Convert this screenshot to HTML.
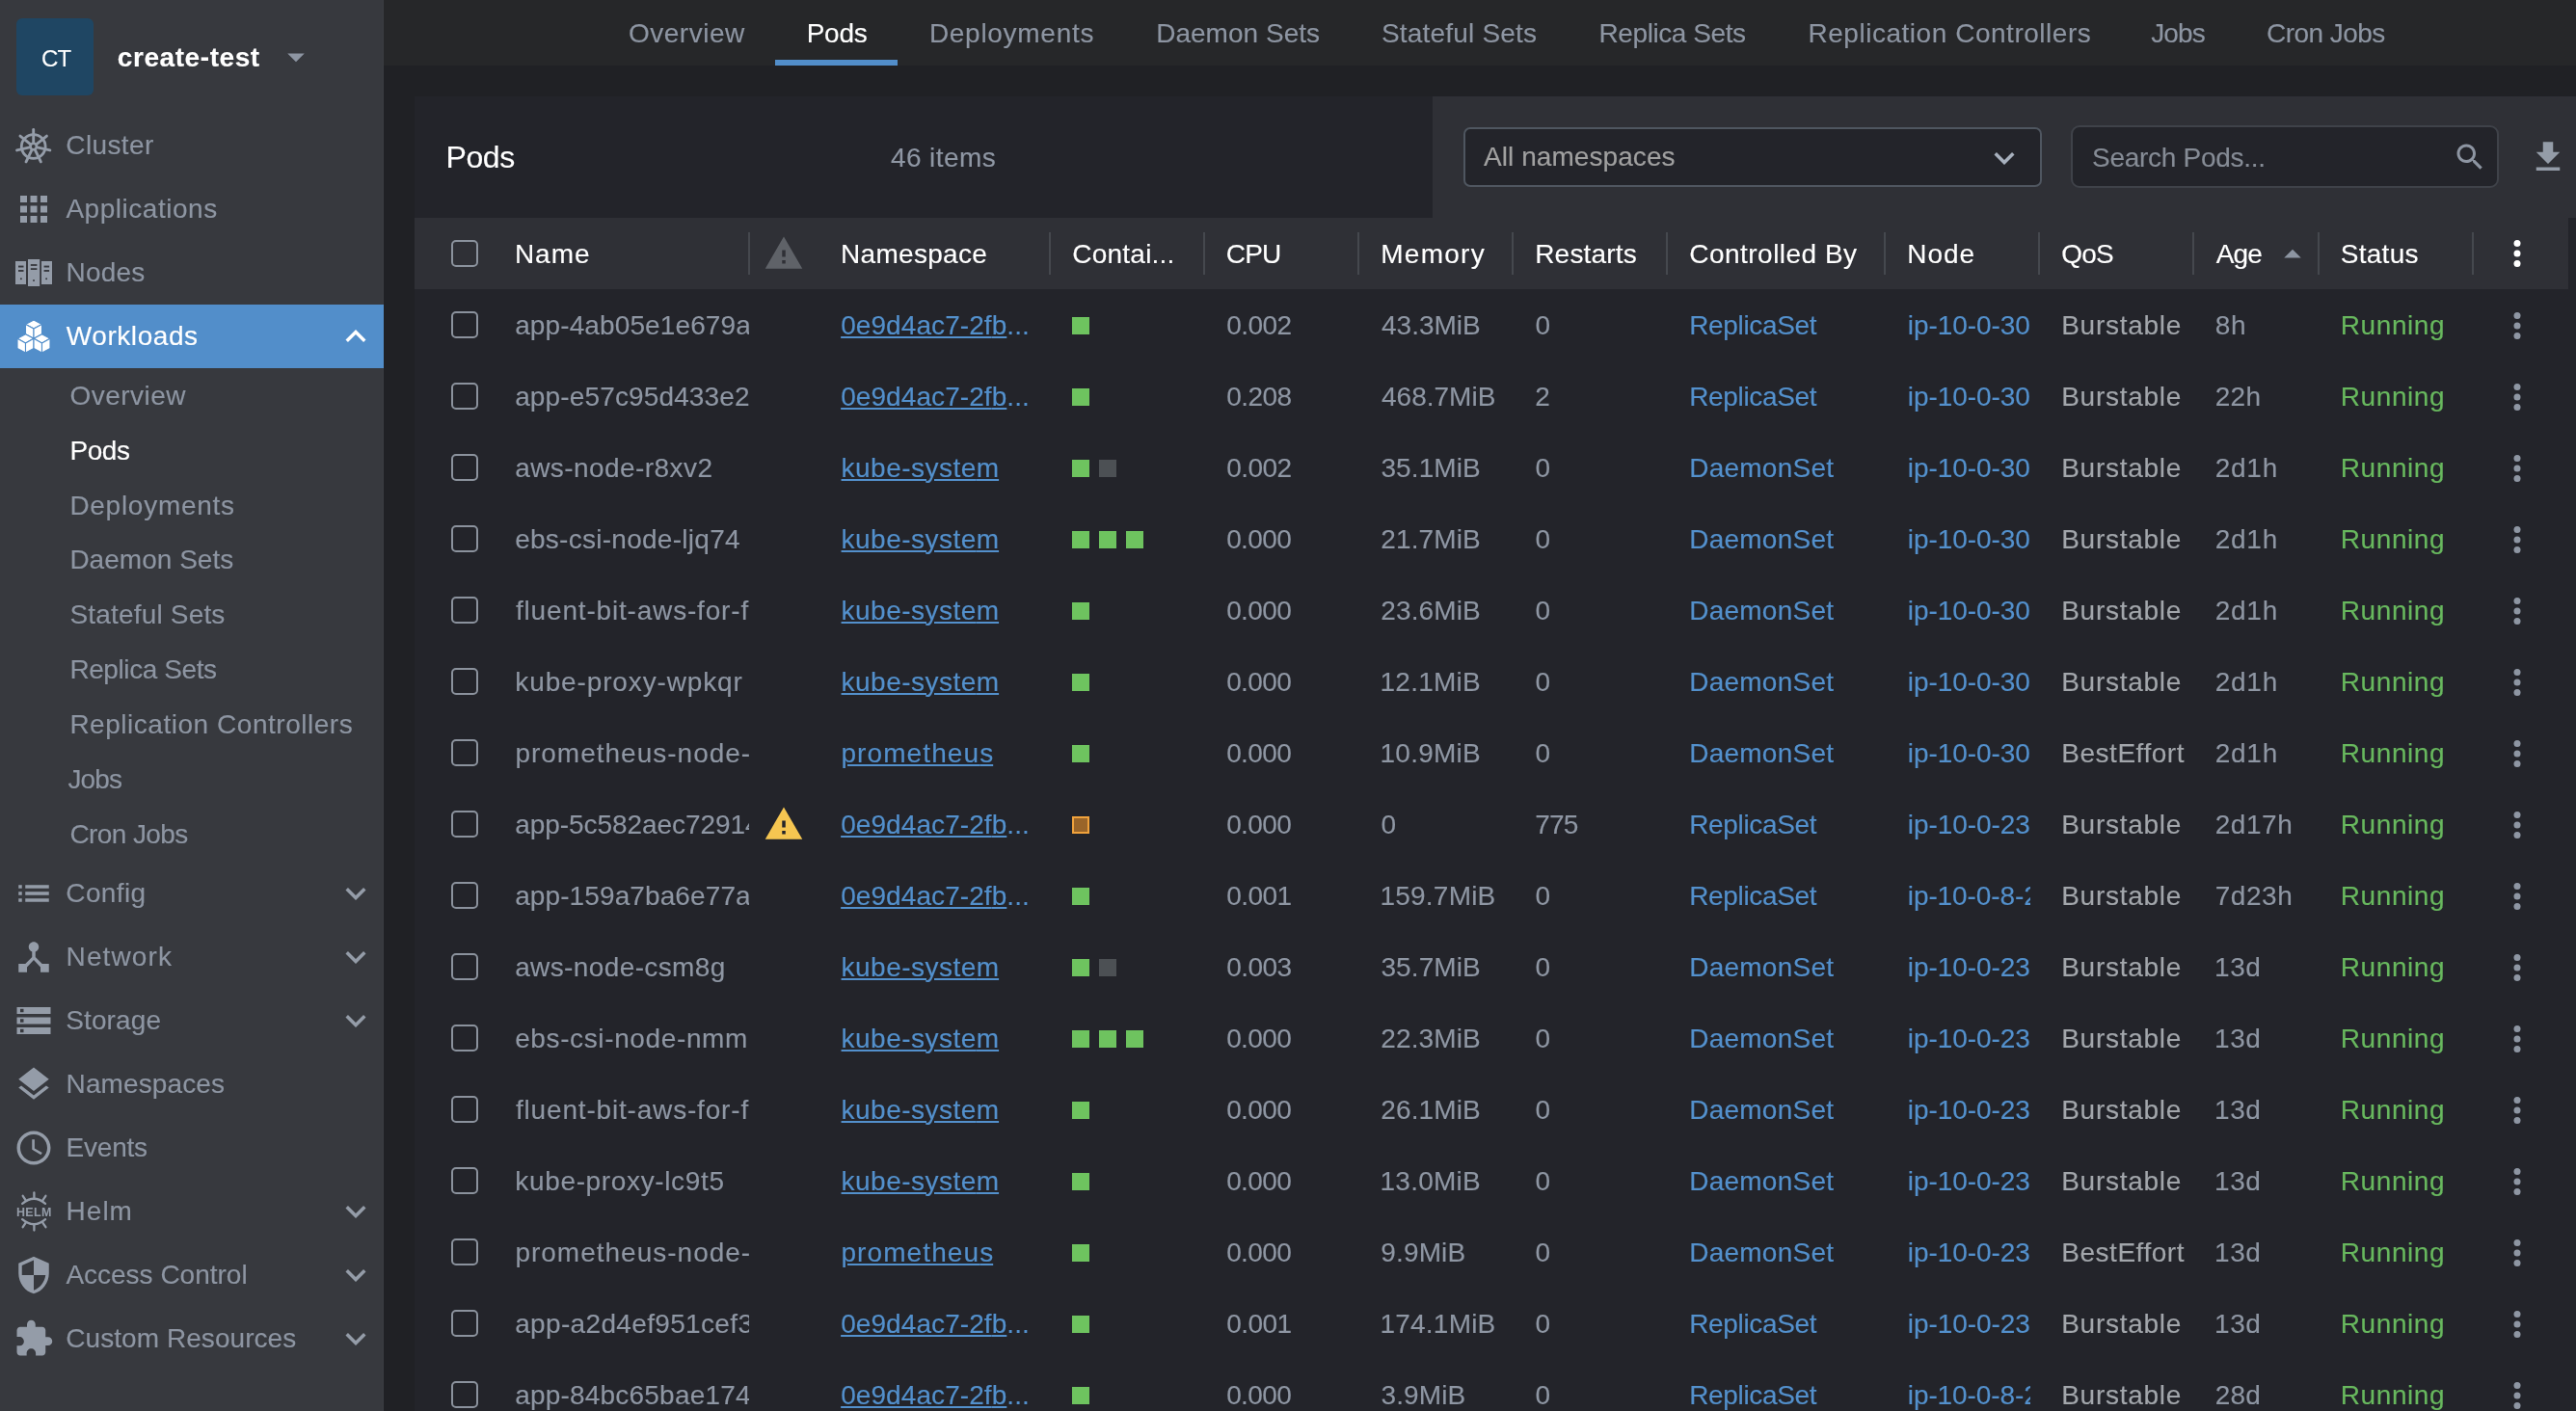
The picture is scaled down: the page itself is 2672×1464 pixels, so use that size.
<!DOCTYPE html>
<html lang="en"><head><meta charset="utf-8"><title>Pods</title><style>
*{box-sizing:border-box}
html,body{margin:0;padding:0}
#app{position:absolute;left:0;top:0;width:2672px;height:1464px;overflow:hidden;will-change:transform}
body{width:2672px;height:1464px;overflow:hidden;background:#202125;font-family:"Liberation Sans",sans-serif;font-size:28px;position:relative}
.b{position:absolute}
.t{position:absolute;white-space:pre;line-height:40px;height:40px;-webkit-text-stroke:0.14px}
.t u{text-decoration-thickness:2px;text-underline-offset:2px}
.t .z{letter-spacing:0}
.ic{position:absolute;width:42px;height:42px;display:block}
.sq{position:absolute;width:18px;height:18px;display:block}
.cb{position:absolute;width:28px;height:28px;border:2px solid #8b929d;border-radius:5px;display:block}
.sep{position:absolute;top:241px;width:2px;height:44px;background:#45484e;display:block}
</style></head><body><div id="app">
<div class="b" style="left:0;top:0;width:398px;height:1464px;background:#37393e"></div>
<div class="b" style="left:397px;top:0;width:1px;height:1464px;background:#3a3c41"></div>
<div class="b" style="left:17px;top:19px;width:80px;height:80px;border-radius:6px;background:#1f4663"></div>
<div class="b" style="left:0;top:316px;width:398px;height:66px;background:#528eca"></div>
<div class="b" style="left:398px;top:0;width:2274px;height:68px;background:#262729"></div>
<div class="b" style="left:804px;top:62px;width:127px;height:6px;background:#528eca"></div>
<div class="b" style="left:430px;top:100px;width:2242px;height:1364px;background:#23242a"></div>
<div class="b" style="left:1486px;top:100px;width:1186px;height:126px;background:#2f3036"></div>
<div class="b" style="left:430px;top:226px;width:2234px;height:74px;background:#2f3036"></div>
<div class="b" style="left:1518px;top:132px;width:600px;height:61.6px;border:2px solid #4f5660;border-radius:7px;background:#23242a"></div>
<div class="b" style="left:2148px;top:130px;width:444px;height:64.5px;border:2px solid #3f4249;border-radius:9px;background:#23242a"></div>
<i class="cb" style="left:468px;top:249px"></i>
<i class="sep" style="left:776px"></i><i class="sep" style="left:1088px"></i><i class="sep" style="left:1248px"></i><i class="sep" style="left:1408px"></i><i class="sep" style="left:1568px"></i><i class="sep" style="left:1728px"></i><i class="sep" style="left:1954px"></i><i class="sep" style="left:2114px"></i><i class="sep" style="left:2274px"></i><i class="sep" style="left:2404px"></i><i class="sep" style="left:2564px"></i>
<svg class="ic" style="left:0;top:120px;width:70px;height:64px" viewBox="0 120 70 64"><g stroke="#949ca8" fill="none"><circle cx="34.7" cy="152.0" r="12.4" stroke-width="2.8"/><g stroke-width="2.9" stroke-linecap="round"><line x1="34.70" y1="148.00" x2="34.70" y2="134.40"/><line x1="37.83" y1="149.51" x2="48.46" y2="141.03"/><line x1="38.60" y1="152.89" x2="51.86" y2="155.92"/><line x1="36.44" y1="155.60" x2="42.34" y2="167.86"/><line x1="32.96" y1="155.60" x2="27.06" y2="167.86"/><line x1="30.80" y1="152.89" x2="17.54" y2="155.92"/><line x1="31.57" y1="149.51" x2="20.94" y2="141.03"/></g><circle cx="34.7" cy="152.0" r="3.2" stroke-width="2.6"/></g></svg>
<svg class="ic" style="left:14px;top:195.8px;width:42px;height:42px" viewBox="0 0 24 24" fill="#949ca8" ><path d="M4 8h4V4H4v4zm6 12h4v-4h-4v4zm-6 0h4v-4H4v4zm0-6h4v-4H4v4zm6 0h4v-4h-4v4zm6-10v4h4V4h-4zm-6 4h4V4h-4v4zm6 6h4v-4h-4v4zm0 6h4v-4h-4v4z"/></svg>
<svg class="ic" style="left:0;top:260px;width:70px;height:46px" viewBox="0 260 70 46"><g fill="#949ca8"><rect x="16" y="271" width="11" height="24"/><rect x="29" y="269" width="12.2" height="28"/><rect x="43" y="271" width="11" height="24"/></g><g fill="#37393e"><rect x="19" y="275.6" width="5.5" height="1.9"/><rect x="19" y="280" width="5.5" height="1.9"/><rect x="31.8" y="274.1" width="6.6" height="1.8"/><rect x="31.8" y="278.2" width="6.6" height="1.8"/><rect x="45.6" y="275.6" width="5.5" height="1.9"/><rect x="45.6" y="280" width="5.5" height="1.9"/><circle cx="21.9" cy="289.3" r="1"/><circle cx="35" cy="291.1" r="1"/><circle cx="48.1" cy="289.3" r="1"/></g></svg>
<svg class="ic" style="left:0;top:326px;width:70px;height:46px" viewBox="0 326 70 46"><g fill="#fff" stroke="#528eca" stroke-width="1.1" stroke-linejoin="round"><polygon points="35,331.9 43.5,336.5 35,341.09999999999997 26.5,336.5"/><polygon points="26.5,336.5 35,341.09999999999997 35,351.29999999999995 26.5,346.7"/><polygon points="43.5,336.5 35,341.09999999999997 35,351.29999999999995 43.5,346.7"/><polygon points="26.5,346.7 35.0,351.3 26.5,355.9 18.0,351.3"/><polygon points="18.0,351.3 26.5,355.9 26.5,366.09999999999997 18.0,361.5"/><polygon points="35.0,351.3 26.5,355.9 26.5,366.09999999999997 35.0,361.5"/><polygon points="43.5,346.7 52.0,351.3 43.5,355.9 35.0,351.3"/><polygon points="35.0,351.3 43.5,355.9 43.5,366.09999999999997 35.0,361.5"/><polygon points="52.0,351.3 43.5,355.9 43.5,366.09999999999997 52.0,361.5"/></g></svg>
<svg class="ic" style="left:348px;top:327.8px;width:42px;height:42px" viewBox="0 0 24 24" fill="#fff" ><path d="M7.41 15.41L12 10.83l4.59 4.58L18 14l-6-6-6 6z"/></svg>
<svg class="ic" style="left:14px;top:906.1px;width:42px;height:42px" viewBox="0 0 24 24" fill="#949ca8" ><path d="M3 13h2v-2H3v2zm0 4h2v-2H3v2zm0-8h2V7H3v2zm4 4h14v-2H7v2zm0 4h14v-2H7v2zM7 7v2h14V7H7z"/></svg>
<svg class="ic" style="left:14px;top:972.1px;width:42px;height:42px" viewBox="0 0 24 24" fill="#949ca8" ><path d="M17 16l-4-4V8.82C14.16 8.4 15 7.3 15 6c0-1.66-1.34-3-3-3S9 4.34 9 6c0 1.3.84 2.4 2 2.82V12l-4 4H3v5h5v-3.05l4-4.2 4 4.2V21h5v-5h-4z"/></svg>
<svg class="ic" style="left:14px;top:1038.1px;width:42px;height:42px" viewBox="0 0 24 24" fill="#949ca8" ><path d="M2 20h20v-4H2v4zm2-3h2v2H4v-2zM2 4v4h20V4H2zm4 3H4V5h2v2zm-4 7h20v-4H2v4zm2-3h2v2H4v-2z"/></svg>
<svg class="ic" style="left:14px;top:1104.1px;width:42px;height:42px" viewBox="0 0 24 24" fill="#949ca8" ><path d="M11.99 18.54l-7.37-5.73L3 14.07l9 7 9-7-1.63-1.27-7.38 5.74zM12 16l7.36-5.73L21 9l-9-7-9 7 1.63 1.27L12 16z"/></svg>
<svg class="ic" style="left:14px;top:1170.1px;width:42px;height:42px" viewBox="0 0 24 24" fill="#949ca8" ><path d="M11.99 2C6.47 2 2 6.48 2 12s4.47 10 9.99 10C17.52 22 22 17.52 22 12S17.52 2 11.99 2zM12 20c-4.42 0-8-3.58-8-8s3.58-8 8-8 8 3.58 8 8-3.58 8-8 8zm.5-13H11v6l5.25 3.15.75-1.23-4.5-2.67z"/></svg>
<svg class="ic" style="left:14px;top:1302.1px;width:42px;height:42px" viewBox="0 0 24 24" fill="#949ca8" ><path d="M12 1L3 5v6c0 5.55 3.84 10.74 9 12 5.16-1.26 9-6.45 9-12V5l-9-4zm0 10.99h7c-.53 4.12-3.28 7.79-7 8.94V12H5V6.3l7-3.11v8.8z"/></svg>
<svg class="ic" style="left:14px;top:1368.1px;width:42px;height:42px" viewBox="0 0 24 24" fill="#949ca8" ><path d="M20.5 11H19V7c0-1.1-.9-2-2-2h-4V3.5C13 2.12 11.88 1 10.5 1S8 2.12 8 3.5V5H4c-1.1 0-1.99.9-1.99 2v3.8H3.5c1.49 0 2.7 1.21 2.7 2.7s-1.21 2.7-2.7 2.7H2V20c0 1.1.9 2 2 2h3.8v-1.5c0-1.49 1.21-2.7 2.7-2.7 1.49 0 2.7 1.21 2.7 2.7V22H17c1.1 0 2-.9 2-2v-4h1.5c1.38 0 2.5-1.12 2.5-2.5S21.88 11 20.5 11z"/></svg>
<svg class="ic" style="left:348px;top:906.1px;width:42px;height:42px" viewBox="0 0 24 24" fill="#949ca8" ><path d="M7.41 8.59L12 13.17l4.59-4.58L18 10l-6 6-6-6 1.41-1.41z"/></svg>
<svg class="ic" style="left:348px;top:972.1px;width:42px;height:42px" viewBox="0 0 24 24" fill="#949ca8" ><path d="M7.41 8.59L12 13.17l4.59-4.58L18 10l-6 6-6-6 1.41-1.41z"/></svg>
<svg class="ic" style="left:348px;top:1038.1px;width:42px;height:42px" viewBox="0 0 24 24" fill="#949ca8" ><path d="M7.41 8.59L12 13.17l4.59-4.58L18 10l-6 6-6-6 1.41-1.41z"/></svg>
<svg class="ic" style="left:348px;top:1236.1px;width:42px;height:42px" viewBox="0 0 24 24" fill="#949ca8" ><path d="M7.41 8.59L12 13.17l4.59-4.58L18 10l-6 6-6-6 1.41-1.41z"/></svg>
<svg class="ic" style="left:348px;top:1302.1px;width:42px;height:42px" viewBox="0 0 24 24" fill="#949ca8" ><path d="M7.41 8.59L12 13.17l4.59-4.58L18 10l-6 6-6-6 1.41-1.41z"/></svg>
<svg class="ic" style="left:348px;top:1368.1px;width:42px;height:42px" viewBox="0 0 24 24" fill="#949ca8" ><path d="M7.41 8.59L12 13.17l4.59-4.58L18 10l-6 6-6-6 1.41-1.41z"/></svg>
<svg class="ic" style="left:0;top:1230px;width:70px;height:54px" viewBox="0 1230 70 54"><g stroke="#949ca8" stroke-width="2.3" fill="none" stroke-linecap="round"><path d="M23.2 1248.9 Q35.2 1238.6 47.0 1248.9" /><line x1="35.4" y1="1243.4" x2="35.4" y2="1237.5"/><line x1="27.0" y1="1245.8" x2="23.7" y2="1240.8"/><line x1="44.0" y1="1245.8" x2="47.4" y2="1240.8"/><path d="M23.2 1265.1 Q35.2 1275.4 47.0 1265.1" /><line x1="35.4" y1="1270.6" x2="35.4" y2="1276.5"/><line x1="27.0" y1="1268.2" x2="23.7" y2="1273.2"/><line x1="44.0" y1="1268.2" x2="47.4" y2="1273.2"/></g><text transform="translate(0,1261.8) scale(1,1.08)" x="16.9" y="0" textLength="36.5" lengthAdjust="spacing" font-family="Liberation Sans, sans-serif" font-weight="700" font-size="12.5" fill="#949ca8">HELM</text></svg>
<svg class="ic" style="left:285.7px;top:37.800000000000004px;width:42px;height:42px" viewBox="0 0 24 24" fill="#8d95a2" ><path d="M7 10l5 5 5-5z"/></svg>
<svg class="ic" style="left:2058px;top:142.8px;width:42px;height:42px" viewBox="0 0 24 24" fill="#a7b0bd" ><path d="M7.41 8.59L12 13.17l4.59-4.58L18 10l-6 6-6-6 1.41-1.41z"/></svg>
<svg class="ic" style="left:2544px;top:144.6px;width:36px;height:36px" viewBox="0 0 24 24" fill="#8d95a2" ><path d="M15.5 14h-.79l-.28-.27C15.41 12.59 16 11.11 16 9.5 16 5.91 13.09 3 9.5 3S3 5.91 3 9.5 5.91 16 9.5 16c1.61 0 3.09-.59 4.23-1.57l.27.28v.79l5 4.99L20.49 19l-4.99-5zm-6 0C7.01 14 5 11.99 5 9.5S7.01 5 9.5 5 14 7.01 14 9.5 11.99 14 9.5 14z"/></svg>
<svg class="ic" style="left:2622px;top:141.6px;width:42px;height:42px" viewBox="0 0 24 24" fill="#949ca8" ><path d="M19 9h-4V3H9v6H5l7 7 7-7zM5 18v2h14v-2H5z"/></svg>
<svg class="ic" style="left:792px;top:241.5px;width:42px;height:42px" viewBox="0 0 24 24" fill="#5f6268" ><path d="M1 21h22L12 2 1 21zm12-3h-2v-2h2v2zm0-4h-2v-4h2v4z"/></svg>
<svg class="ic" style="left:2357px;top:243.4px;width:42px;height:42px" viewBox="0 0 24 24" fill="#8d95a2" ><path d="M7 14l5-5 5 5z"/></svg>
<svg class="ic" style="left:2590px;top:242px" viewBox="0 0 24 24" fill="#fff"><circle cx="12" cy="6" r="2"/><circle cx="12" cy="12" r="2"/><circle cx="12" cy="18" r="2"/></svg>
<i class="sq" style="left:1112px;top:329px;background:#6ec35f"></i>
<i class="cb" style="left:468px;top:323px"></i>
<svg class="ic" style="left:2590px;top:317px" viewBox="0 0 24 24" fill="#8e96a3"><circle cx="12" cy="6" r="2"/><circle cx="12" cy="12" r="2"/><circle cx="12" cy="18" r="2"/></svg>
<i class="sq" style="left:1112px;top:403px;background:#6ec35f"></i>
<i class="cb" style="left:468px;top:397px"></i>
<svg class="ic" style="left:2590px;top:391px" viewBox="0 0 24 24" fill="#8e96a3"><circle cx="12" cy="6" r="2"/><circle cx="12" cy="12" r="2"/><circle cx="12" cy="18" r="2"/></svg>
<i class="sq" style="left:1112px;top:477px;background:#6ec35f"></i>
<i class="sq" style="left:1140px;top:477px;background:#4c5054"></i>
<i class="cb" style="left:468px;top:471px"></i>
<svg class="ic" style="left:2590px;top:465px" viewBox="0 0 24 24" fill="#8e96a3"><circle cx="12" cy="6" r="2"/><circle cx="12" cy="12" r="2"/><circle cx="12" cy="18" r="2"/></svg>
<i class="sq" style="left:1112px;top:551px;background:#6ec35f"></i>
<i class="sq" style="left:1140px;top:551px;background:#6ec35f"></i>
<i class="sq" style="left:1168px;top:551px;background:#6ec35f"></i>
<i class="cb" style="left:468px;top:545px"></i>
<svg class="ic" style="left:2590px;top:539px" viewBox="0 0 24 24" fill="#8e96a3"><circle cx="12" cy="6" r="2"/><circle cx="12" cy="12" r="2"/><circle cx="12" cy="18" r="2"/></svg>
<i class="sq" style="left:1112px;top:625px;background:#6ec35f"></i>
<i class="cb" style="left:468px;top:619px"></i>
<svg class="ic" style="left:2590px;top:613px" viewBox="0 0 24 24" fill="#8e96a3"><circle cx="12" cy="6" r="2"/><circle cx="12" cy="12" r="2"/><circle cx="12" cy="18" r="2"/></svg>
<i class="sq" style="left:1112px;top:699px;background:#6ec35f"></i>
<i class="cb" style="left:468px;top:693px"></i>
<svg class="ic" style="left:2590px;top:687px" viewBox="0 0 24 24" fill="#8e96a3"><circle cx="12" cy="6" r="2"/><circle cx="12" cy="12" r="2"/><circle cx="12" cy="18" r="2"/></svg>
<i class="sq" style="left:1112px;top:773px;background:#6ec35f"></i>
<i class="cb" style="left:468px;top:767px"></i>
<svg class="ic" style="left:2590px;top:761px" viewBox="0 0 24 24" fill="#8e96a3"><circle cx="12" cy="6" r="2"/><circle cx="12" cy="12" r="2"/><circle cx="12" cy="18" r="2"/></svg>
<i class="sq" style="left:1112px;top:847px;background:#9a6529;box-shadow:inset 0 0 0 2px #f0a23c"></i>
<i class="cb" style="left:468px;top:841px"></i>
<svg class="ic" style="left:2590px;top:835px" viewBox="0 0 24 24" fill="#8e96a3"><circle cx="12" cy="6" r="2"/><circle cx="12" cy="12" r="2"/><circle cx="12" cy="18" r="2"/></svg>
<svg class="ic" style="left:792px;top:833.5px" viewBox="0 0 24 24"><path fill="#f6c651" d="M1 21h22L12 2 1 21z"/><path fill="#23242a" d="M13 18h-2v-2h2v2zm0-4h-2v-4h2v4z"/></svg>
<i class="sq" style="left:1112px;top:921px;background:#6ec35f"></i>
<i class="cb" style="left:468px;top:915px"></i>
<svg class="ic" style="left:2590px;top:909px" viewBox="0 0 24 24" fill="#8e96a3"><circle cx="12" cy="6" r="2"/><circle cx="12" cy="12" r="2"/><circle cx="12" cy="18" r="2"/></svg>
<i class="sq" style="left:1112px;top:995px;background:#6ec35f"></i>
<i class="sq" style="left:1140px;top:995px;background:#4c5054"></i>
<i class="cb" style="left:468px;top:989px"></i>
<svg class="ic" style="left:2590px;top:983px" viewBox="0 0 24 24" fill="#8e96a3"><circle cx="12" cy="6" r="2"/><circle cx="12" cy="12" r="2"/><circle cx="12" cy="18" r="2"/></svg>
<i class="sq" style="left:1112px;top:1069px;background:#6ec35f"></i>
<i class="sq" style="left:1140px;top:1069px;background:#6ec35f"></i>
<i class="sq" style="left:1168px;top:1069px;background:#6ec35f"></i>
<i class="cb" style="left:468px;top:1063px"></i>
<svg class="ic" style="left:2590px;top:1057px" viewBox="0 0 24 24" fill="#8e96a3"><circle cx="12" cy="6" r="2"/><circle cx="12" cy="12" r="2"/><circle cx="12" cy="18" r="2"/></svg>
<i class="sq" style="left:1112px;top:1143px;background:#6ec35f"></i>
<i class="cb" style="left:468px;top:1137px"></i>
<svg class="ic" style="left:2590px;top:1131px" viewBox="0 0 24 24" fill="#8e96a3"><circle cx="12" cy="6" r="2"/><circle cx="12" cy="12" r="2"/><circle cx="12" cy="18" r="2"/></svg>
<i class="sq" style="left:1112px;top:1217px;background:#6ec35f"></i>
<i class="cb" style="left:468px;top:1211px"></i>
<svg class="ic" style="left:2590px;top:1205px" viewBox="0 0 24 24" fill="#8e96a3"><circle cx="12" cy="6" r="2"/><circle cx="12" cy="12" r="2"/><circle cx="12" cy="18" r="2"/></svg>
<i class="sq" style="left:1112px;top:1291px;background:#6ec35f"></i>
<i class="cb" style="left:468px;top:1285px"></i>
<svg class="ic" style="left:2590px;top:1279px" viewBox="0 0 24 24" fill="#8e96a3"><circle cx="12" cy="6" r="2"/><circle cx="12" cy="12" r="2"/><circle cx="12" cy="18" r="2"/></svg>
<i class="sq" style="left:1112px;top:1365px;background:#6ec35f"></i>
<i class="cb" style="left:468px;top:1359px"></i>
<svg class="ic" style="left:2590px;top:1353px" viewBox="0 0 24 24" fill="#8e96a3"><circle cx="12" cy="6" r="2"/><circle cx="12" cy="12" r="2"/><circle cx="12" cy="18" r="2"/></svg>
<i class="sq" style="left:1112px;top:1439px;background:#6ec35f"></i>
<i class="cb" style="left:468px;top:1433px"></i>
<svg class="ic" style="left:2590px;top:1427px" viewBox="0 0 24 24" fill="#8e96a3"><circle cx="12" cy="6" r="2"/><circle cx="12" cy="12" r="2"/><circle cx="12" cy="18" r="2"/></svg>
<div class="t" style="left:43.03px;top:41px;color:#ffffff;font-size:24px;letter-spacing:-0.900px;">CT</div>
<div class="t" style="left:121.83px;top:40px;color:#ffffff;font-weight:700;letter-spacing:0.571px;">create-test</div>
<div class="t" style="left:68.35px;top:131px;color:#8d95a2;letter-spacing:0.367px;">Cluster</div>
<div class="t" style="left:68.39px;top:197px;color:#8d95a2;letter-spacing:0.528px;">Applications</div>
<div class="t" style="left:68.59px;top:263px;color:#8d95a2;letter-spacing:0.177px;">Nodes</div>
<div class="t" style="left:68.79px;top:329px;color:#ffffff;letter-spacing:0.566px;">Workloads</div>
<div class="t" style="left:68.35px;top:907px;color:#8d95a2;letter-spacing:0.363px;">Config</div>
<div class="t" style="left:68.59px;top:973px;color:#8d95a2;letter-spacing:1.113px;">Network</div>
<div class="t" style="left:68.20px;top:1039px;color:#8d95a2;letter-spacing:0.125px;">Storage</div>
<div class="t" style="left:68.59px;top:1105px;color:#8d95a2;letter-spacing:0.115px;">Namespaces</div>
<div class="t" style="left:68.59px;top:1171px;color:#8d95a2;letter-spacing:-0.232px;">Events</div>
<div class="t" style="left:68.59px;top:1237px;color:#8d95a2;letter-spacing:1.003px;">Helm</div>
<div class="t" style="left:68.39px;top:1303px;color:#8d95a2;">Access Control</div>
<div class="t" style="left:68.35px;top:1369px;color:#8d95a2;letter-spacing:0.050px;">Custom Resources</div>
<div class="t" style="left:72.54px;top:391px;color:#8d95a2;letter-spacing:0.459px;">Overview</div>
<div class="t" style="left:72.39px;top:448px;color:#ffffff;letter-spacing:-0.390px;">Pods</div>
<div class="t" style="left:72.39px;top:505px;color:#8d95a2;letter-spacing:0.724px;">Deployments</div>
<div class="t" style="left:72.39px;top:561px;color:#8d95a2;letter-spacing:0.023px;">Daemon Sets</div>
<div class="t" style="left:72.40px;top:618px;color:#8d95a2;letter-spacing:0.185px;">Stateful Sets</div>
<div class="t" style="left:72.39px;top:675px;color:#8d95a2;letter-spacing:-0.410px;">Replica Sets</div>
<div class="t" style="left:72.39px;top:732px;color:#8d95a2;letter-spacing:0.529px;">Replication Controllers</div>
<div class="t" style="left:70.45px;top:789px;color:#8d95a2;letter-spacing:-0.900px;">Jobs</div>
<div class="t" style="left:72.45px;top:846px;color:#8d95a2;letter-spacing:-0.591px;">Cron Jobs</div>
<div class="t" style="left:651.94px;top:15px;color:#8d95a2;letter-spacing:0.516px;">Overview</div>
<div class="t" style="left:836.69px;top:15px;color:#ffffff;letter-spacing:-0.257px;">Pods</div>
<div class="t" style="left:963.89px;top:15px;color:#8d95a2;letter-spacing:0.714px;">Deployments</div>
<div class="t" style="left:1199.19px;top:15px;color:#8d95a2;letter-spacing:0.023px;">Daemon Sets</div>
<div class="t" style="left:1433.00px;top:15px;color:#8d95a2;letter-spacing:0.193px;">Stateful Sets</div>
<div class="t" style="left:1658.59px;top:15px;color:#8d95a2;letter-spacing:-0.428px;">Replica Sets</div>
<div class="t" style="left:1875.49px;top:15px;color:#8d95a2;letter-spacing:0.529px;">Replication Controllers</div>
<div class="t" style="left:2231.25px;top:15px;color:#8d95a2;letter-spacing:-0.900px;">Jobs</div>
<div class="t" style="left:2351.05px;top:15px;color:#8d95a2;letter-spacing:-0.553px;">Cron Jobs</div>
<div class="t" style="left:462.57px;top:143px;color:#ffffff;font-size:32px;letter-spacing:-0.441px;">Pods</div>
<div class="t" style="left:923.94px;top:144px;color:#8e96a3;letter-spacing:0.411px;">46 items</div>
<div class="t" style="left:1538.99px;top:143px;color:#a0a0a0;letter-spacing:0.072px;">All namespaces</div>
<div class="t" style="left:2170.10px;top:144px;color:#858b95;letter-spacing:-0.287px;">Search Pods...</div>
<div class="t" style="left:533.89px;top:244px;color:#ffffff;letter-spacing:0.997px;">Name</div>
<div class="t" style="left:872.09px;top:244px;color:#ffffff;letter-spacing:0.289px;">Namespace</div>
<div class="t" style="left:1112.25px;top:244px;color:#ffffff;letter-spacing:0.233px;">Contai...</div>
<div class="t" style="left:1271.85px;top:244px;color:#ffffff;letter-spacing:-0.900px;">CPU</div>
<div class="t" style="left:1432.19px;top:244px;color:#ffffff;letter-spacing:1.279px;">Memory</div>
<div class="t" style="left:1592.19px;top:244px;color:#ffffff;letter-spacing:0.199px;">Restarts</div>
<div class="t" style="left:1752.25px;top:244px;color:#ffffff;letter-spacing:0.478px;">Controlled By</div>
<div class="t" style="left:1978.29px;top:244px;color:#ffffff;letter-spacing:0.914px;">Node</div>
<div class="t" style="left:2138.34px;top:244px;color:#ffffff;letter-spacing:-0.900px;">QoS</div>
<div class="t" style="left:2298.79px;top:244px;color:#ffffff;letter-spacing:-0.900px;">Age</div>
<div class="t" style="left:2427.80px;top:244px;color:#ffffff;letter-spacing:0.266px;">Status</div>
<div class="t" style="left:534.16px;top:318px;color:#8e96a3;letter-spacing:0.113px;width:242.44px;overflow:hidden;">app-4ab05e1e679a9c-6d8f7b9c54-x2kqp</div>
<div class="t" style="left:872.13px;top:318px;color:#5390cc;letter-spacing:0.081px;"><u>0e9d4ac7-2f<span class="z">b</span></u>...</div>
<div class="t" style="left:1272.13px;top:318px;color:#8e96a3;letter-spacing:-0.508px;">0.002</div>
<div class="t" style="left:1433.04px;top:318px;color:#8e96a3;letter-spacing:-0.012px;">43.3MiB</div>
<div class="t" style="left:1592.53px;top:318px;color:#8e96a3;">0</div>
<div class="t" style="left:1752.19px;top:318px;color:#5390cc;letter-spacing:-0.346px;">ReplicaSet</div>
<div class="t" style="left:1978.75px;top:318px;color:#5390cc;letter-spacing:-0.071px;width:127.25px;overflow:hidden;">ip-10-0-30-147.ec2.internal</div>
<div class="t" style="left:2138.19px;top:318px;color:#a2a6ab;letter-spacing:0.739px;">Burstable</div>
<div class="t" style="left:2297.83px;top:318px;color:#8e96a3;letter-spacing:0.698px;">8h</div>
<div class="t" style="left:2427.79px;top:318px;color:#68b85e;letter-spacing:0.585px;">Running</div>
<div class="t" style="left:534.16px;top:392px;color:#8e96a3;letter-spacing:0.139px;width:242.44px;overflow:hidden;">app-e57c95d433e2-7c9d5f6b48-m4tzn</div>
<div class="t" style="left:872.13px;top:392px;color:#5390cc;letter-spacing:0.081px;"><u>0e9d4ac7-2f<span class="z">b</span></u>...</div>
<div class="t" style="left:1272.13px;top:392px;color:#8e96a3;letter-spacing:-0.535px;">0.208</div>
<div class="t" style="left:1433.04px;top:392px;color:#8e96a3;">468.7MiB</div>
<div class="t" style="left:1592.27px;top:392px;color:#8e96a3;">2</div>
<div class="t" style="left:1752.19px;top:392px;color:#5390cc;letter-spacing:-0.346px;">ReplicaSet</div>
<div class="t" style="left:1978.75px;top:392px;color:#5390cc;letter-spacing:-0.071px;width:127.25px;overflow:hidden;">ip-10-0-30-147.ec2.internal</div>
<div class="t" style="left:2138.19px;top:392px;color:#a2a6ab;letter-spacing:0.739px;">Burstable</div>
<div class="t" style="left:2297.67px;top:392px;color:#8e96a3;letter-spacing:0.292px;">22h</div>
<div class="t" style="left:2427.79px;top:392px;color:#68b85e;letter-spacing:0.585px;">Running</div>
<div class="t" style="left:534.16px;top:466px;color:#8e96a3;letter-spacing:0.434px;width:242.44px;overflow:hidden;">aws-node-r8xv2</div>
<div class="t" style="left:872.55px;top:466px;color:#5390cc;letter-spacing:0.482px;"><u>kube-syste<span class="z">m</span></u></div>
<div class="t" style="left:1272.13px;top:466px;color:#8e96a3;letter-spacing:-0.508px;">0.002</div>
<div class="t" style="left:1432.46px;top:466px;color:#8e96a3;letter-spacing:0.084px;">35.1MiB</div>
<div class="t" style="left:1592.53px;top:466px;color:#8e96a3;">0</div>
<div class="t" style="left:1752.19px;top:466px;color:#5390cc;letter-spacing:0.243px;">DaemonSet</div>
<div class="t" style="left:1978.75px;top:466px;color:#5390cc;letter-spacing:-0.071px;width:127.25px;overflow:hidden;">ip-10-0-30-147.ec2.internal</div>
<div class="t" style="left:2138.19px;top:466px;color:#a2a6ab;letter-spacing:0.739px;">Burstable</div>
<div class="t" style="left:2297.67px;top:466px;color:#8e96a3;letter-spacing:0.756px;">2d1h</div>
<div class="t" style="left:2427.79px;top:466px;color:#68b85e;letter-spacing:0.585px;">Running</div>
<div class="t" style="left:534.16px;top:540px;color:#8e96a3;letter-spacing:0.271px;width:242.44px;overflow:hidden;">ebs-csi-node-ljq74</div>
<div class="t" style="left:872.55px;top:540px;color:#5390cc;letter-spacing:0.482px;"><u>kube-syste<span class="z">m</span></u></div>
<div class="t" style="left:1272.13px;top:540px;color:#8e96a3;letter-spacing:-0.599px;">0.000</div>
<div class="t" style="left:1432.27px;top:540px;color:#8e96a3;letter-spacing:0.115px;">21.7MiB</div>
<div class="t" style="left:1592.53px;top:540px;color:#8e96a3;">0</div>
<div class="t" style="left:1752.19px;top:540px;color:#5390cc;letter-spacing:0.243px;">DaemonSet</div>
<div class="t" style="left:1978.75px;top:540px;color:#5390cc;letter-spacing:-0.071px;width:127.25px;overflow:hidden;">ip-10-0-30-147.ec2.internal</div>
<div class="t" style="left:2138.19px;top:540px;color:#a2a6ab;letter-spacing:0.739px;">Burstable</div>
<div class="t" style="left:2297.67px;top:540px;color:#8e96a3;letter-spacing:0.756px;">2d1h</div>
<div class="t" style="left:2427.79px;top:540px;color:#68b85e;letter-spacing:0.585px;">Running</div>
<div class="t" style="left:534.99px;top:614px;color:#8e96a3;letter-spacing:0.819px;width:241.61px;overflow:hidden;">fluent-bit-aws-for-fluent-bit-7xk2m</div>
<div class="t" style="left:872.55px;top:614px;color:#5390cc;letter-spacing:0.482px;"><u>kube-syste<span class="z">m</span></u></div>
<div class="t" style="left:1272.13px;top:614px;color:#8e96a3;letter-spacing:-0.599px;">0.000</div>
<div class="t" style="left:1432.27px;top:614px;color:#8e96a3;letter-spacing:0.115px;">23.6MiB</div>
<div class="t" style="left:1592.53px;top:614px;color:#8e96a3;">0</div>
<div class="t" style="left:1752.19px;top:614px;color:#5390cc;letter-spacing:0.243px;">DaemonSet</div>
<div class="t" style="left:1978.75px;top:614px;color:#5390cc;letter-spacing:-0.071px;width:127.25px;overflow:hidden;">ip-10-0-30-147.ec2.internal</div>
<div class="t" style="left:2138.19px;top:614px;color:#a2a6ab;letter-spacing:0.739px;">Burstable</div>
<div class="t" style="left:2297.67px;top:614px;color:#8e96a3;letter-spacing:0.756px;">2d1h</div>
<div class="t" style="left:2427.79px;top:614px;color:#68b85e;letter-spacing:0.585px;">Running</div>
<div class="t" style="left:534.35px;top:688px;color:#8e96a3;letter-spacing:0.867px;width:242.25px;overflow:hidden;">kube-proxy-wpkqr</div>
<div class="t" style="left:872.55px;top:688px;color:#5390cc;letter-spacing:0.482px;"><u>kube-syste<span class="z">m</span></u></div>
<div class="t" style="left:1272.13px;top:688px;color:#8e96a3;letter-spacing:-0.599px;">0.000</div>
<div class="t" style="left:1431.50px;top:688px;color:#8e96a3;letter-spacing:0.244px;">12.1MiB</div>
<div class="t" style="left:1592.53px;top:688px;color:#8e96a3;">0</div>
<div class="t" style="left:1752.19px;top:688px;color:#5390cc;letter-spacing:0.243px;">DaemonSet</div>
<div class="t" style="left:1978.75px;top:688px;color:#5390cc;letter-spacing:-0.071px;width:127.25px;overflow:hidden;">ip-10-0-30-147.ec2.internal</div>
<div class="t" style="left:2138.19px;top:688px;color:#a2a6ab;letter-spacing:0.739px;">Burstable</div>
<div class="t" style="left:2297.67px;top:688px;color:#8e96a3;letter-spacing:0.756px;">2d1h</div>
<div class="t" style="left:2427.79px;top:688px;color:#68b85e;letter-spacing:0.585px;">Running</div>
<div class="t" style="left:534.39px;top:762px;color:#8e96a3;letter-spacing:1.000px;width:242.21px;overflow:hidden;">prometheus-node-exporter-p6n4d</div>
<div class="t" style="left:872.39px;top:762px;color:#5390cc;letter-spacing:1.103px;"><u>prometheu<span class="z">s</span></u></div>
<div class="t" style="left:1272.13px;top:762px;color:#8e96a3;letter-spacing:-0.599px;">0.000</div>
<div class="t" style="left:1431.50px;top:762px;color:#8e96a3;letter-spacing:0.244px;">10.9MiB</div>
<div class="t" style="left:1592.53px;top:762px;color:#8e96a3;">0</div>
<div class="t" style="left:1752.19px;top:762px;color:#5390cc;letter-spacing:0.243px;">DaemonSet</div>
<div class="t" style="left:1978.75px;top:762px;color:#5390cc;letter-spacing:-0.071px;width:127.25px;overflow:hidden;">ip-10-0-30-147.ec2.internal</div>
<div class="t" style="left:2138.19px;top:762px;color:#a2a6ab;letter-spacing:0.543px;">BestEffort</div>
<div class="t" style="left:2297.67px;top:762px;color:#8e96a3;letter-spacing:0.756px;">2d1h</div>
<div class="t" style="left:2427.79px;top:762px;color:#68b85e;letter-spacing:0.585px;">Running</div>
<div class="t" style="left:534.16px;top:836px;color:#8e96a3;letter-spacing:-0.056px;width:242.44px;overflow:hidden;">app-5c582aec72914-5b7d9c6f4-9hvwl</div>
<div class="t" style="left:872.13px;top:836px;color:#5390cc;letter-spacing:0.081px;"><u>0e9d4ac7-2f<span class="z">b</span></u>...</div>
<div class="t" style="left:1272.13px;top:836px;color:#8e96a3;letter-spacing:-0.599px;">0.000</div>
<div class="t" style="left:1432.53px;top:836px;color:#8e96a3;">0</div>
<div class="t" style="left:1592.25px;top:836px;color:#8e96a3;letter-spacing:-0.822px;">775</div>
<div class="t" style="left:1752.19px;top:836px;color:#5390cc;letter-spacing:-0.346px;">ReplicaSet</div>
<div class="t" style="left:1978.75px;top:836px;color:#5390cc;letter-spacing:-0.054px;width:127.25px;overflow:hidden;">ip-10-0-23-118.ec2.internal</div>
<div class="t" style="left:2138.19px;top:836px;color:#a2a6ab;letter-spacing:0.739px;">Burstable</div>
<div class="t" style="left:2297.67px;top:836px;color:#8e96a3;letter-spacing:0.562px;">2d17h</div>
<div class="t" style="left:2427.79px;top:836px;color:#68b85e;letter-spacing:0.585px;">Running</div>
<div class="t" style="left:534.16px;top:910px;color:#8e96a3;letter-spacing:0.104px;width:242.44px;overflow:hidden;">app-159a7ba6e77a9-84c6d7f5b-q7xjd</div>
<div class="t" style="left:872.13px;top:910px;color:#5390cc;letter-spacing:0.081px;"><u>0e9d4ac7-2f<span class="z">b</span></u>...</div>
<div class="t" style="left:1272.13px;top:910px;color:#8e96a3;letter-spacing:-0.514px;">0.001</div>
<div class="t" style="left:1431.50px;top:910px;color:#8e96a3;letter-spacing:0.214px;">159.7MiB</div>
<div class="t" style="left:1592.53px;top:910px;color:#8e96a3;">0</div>
<div class="t" style="left:1752.19px;top:910px;color:#5390cc;letter-spacing:-0.346px;">ReplicaSet</div>
<div class="t" style="left:1978.75px;top:910px;color:#5390cc;letter-spacing:-0.082px;width:127.25px;overflow:hidden;">ip-10-0-8-212.ec2.internal</div>
<div class="t" style="left:2138.19px;top:910px;color:#a2a6ab;letter-spacing:0.739px;">Burstable</div>
<div class="t" style="left:2297.65px;top:910px;color:#8e96a3;letter-spacing:0.567px;">7d23h</div>
<div class="t" style="left:2427.79px;top:910px;color:#68b85e;letter-spacing:0.585px;">Running</div>
<div class="t" style="left:534.16px;top:984px;color:#8e96a3;letter-spacing:0.385px;width:242.44px;overflow:hidden;">aws-node-csm8g</div>
<div class="t" style="left:872.55px;top:984px;color:#5390cc;letter-spacing:0.482px;"><u>kube-syste<span class="z">m</span></u></div>
<div class="t" style="left:1272.13px;top:984px;color:#8e96a3;letter-spacing:-0.531px;">0.003</div>
<div class="t" style="left:1432.46px;top:984px;color:#8e96a3;letter-spacing:0.084px;">35.7MiB</div>
<div class="t" style="left:1592.53px;top:984px;color:#8e96a3;">0</div>
<div class="t" style="left:1752.19px;top:984px;color:#5390cc;letter-spacing:0.243px;">DaemonSet</div>
<div class="t" style="left:1978.75px;top:984px;color:#5390cc;letter-spacing:-0.054px;width:127.25px;overflow:hidden;">ip-10-0-23-118.ec2.internal</div>
<div class="t" style="left:2138.19px;top:984px;color:#a2a6ab;letter-spacing:0.739px;">Burstable</div>
<div class="t" style="left:2296.90px;top:984px;color:#8e96a3;letter-spacing:0.663px;">13d</div>
<div class="t" style="left:2427.79px;top:984px;color:#68b85e;letter-spacing:0.585px;">Running</div>
<div class="t" style="left:534.16px;top:1058px;color:#8e96a3;letter-spacing:0.623px;width:242.44px;overflow:hidden;">ebs-csi-node-nmm9x</div>
<div class="t" style="left:872.55px;top:1058px;color:#5390cc;letter-spacing:0.482px;"><u>kube-syste<span class="z">m</span></u></div>
<div class="t" style="left:1272.13px;top:1058px;color:#8e96a3;letter-spacing:-0.599px;">0.000</div>
<div class="t" style="left:1432.27px;top:1058px;color:#8e96a3;letter-spacing:0.115px;">22.3MiB</div>
<div class="t" style="left:1592.53px;top:1058px;color:#8e96a3;">0</div>
<div class="t" style="left:1752.19px;top:1058px;color:#5390cc;letter-spacing:0.243px;">DaemonSet</div>
<div class="t" style="left:1978.75px;top:1058px;color:#5390cc;letter-spacing:-0.054px;width:127.25px;overflow:hidden;">ip-10-0-23-118.ec2.internal</div>
<div class="t" style="left:2138.19px;top:1058px;color:#a2a6ab;letter-spacing:0.739px;">Burstable</div>
<div class="t" style="left:2296.90px;top:1058px;color:#8e96a3;letter-spacing:0.663px;">13d</div>
<div class="t" style="left:2427.79px;top:1058px;color:#68b85e;letter-spacing:0.585px;">Running</div>
<div class="t" style="left:534.99px;top:1132px;color:#8e96a3;letter-spacing:0.819px;width:241.61px;overflow:hidden;">fluent-bit-aws-for-fluent-bit-7xk2m</div>
<div class="t" style="left:872.55px;top:1132px;color:#5390cc;letter-spacing:0.482px;"><u>kube-syste<span class="z">m</span></u></div>
<div class="t" style="left:1272.13px;top:1132px;color:#8e96a3;letter-spacing:-0.599px;">0.000</div>
<div class="t" style="left:1432.27px;top:1132px;color:#8e96a3;letter-spacing:0.115px;">26.1MiB</div>
<div class="t" style="left:1592.53px;top:1132px;color:#8e96a3;">0</div>
<div class="t" style="left:1752.19px;top:1132px;color:#5390cc;letter-spacing:0.243px;">DaemonSet</div>
<div class="t" style="left:1978.75px;top:1132px;color:#5390cc;letter-spacing:-0.054px;width:127.25px;overflow:hidden;">ip-10-0-23-118.ec2.internal</div>
<div class="t" style="left:2138.19px;top:1132px;color:#a2a6ab;letter-spacing:0.739px;">Burstable</div>
<div class="t" style="left:2296.90px;top:1132px;color:#8e96a3;letter-spacing:0.663px;">13d</div>
<div class="t" style="left:2427.79px;top:1132px;color:#68b85e;letter-spacing:0.585px;">Running</div>
<div class="t" style="left:534.35px;top:1206px;color:#8e96a3;letter-spacing:0.642px;width:242.25px;overflow:hidden;">kube-proxy-lc9t5</div>
<div class="t" style="left:872.55px;top:1206px;color:#5390cc;letter-spacing:0.482px;"><u>kube-syste<span class="z">m</span></u></div>
<div class="t" style="left:1272.13px;top:1206px;color:#8e96a3;letter-spacing:-0.599px;">0.000</div>
<div class="t" style="left:1431.50px;top:1206px;color:#8e96a3;letter-spacing:0.244px;">13.0MiB</div>
<div class="t" style="left:1592.53px;top:1206px;color:#8e96a3;">0</div>
<div class="t" style="left:1752.19px;top:1206px;color:#5390cc;letter-spacing:0.243px;">DaemonSet</div>
<div class="t" style="left:1978.75px;top:1206px;color:#5390cc;letter-spacing:-0.054px;width:127.25px;overflow:hidden;">ip-10-0-23-118.ec2.internal</div>
<div class="t" style="left:2138.19px;top:1206px;color:#a2a6ab;letter-spacing:0.739px;">Burstable</div>
<div class="t" style="left:2296.90px;top:1206px;color:#8e96a3;letter-spacing:0.663px;">13d</div>
<div class="t" style="left:2427.79px;top:1206px;color:#68b85e;letter-spacing:0.585px;">Running</div>
<div class="t" style="left:534.39px;top:1280px;color:#8e96a3;letter-spacing:1.000px;width:242.21px;overflow:hidden;">prometheus-node-exporter-p6n4d</div>
<div class="t" style="left:872.39px;top:1280px;color:#5390cc;letter-spacing:1.103px;"><u>prometheu<span class="z">s</span></u></div>
<div class="t" style="left:1272.13px;top:1280px;color:#8e96a3;letter-spacing:-0.599px;">0.000</div>
<div class="t" style="left:1432.32px;top:1280px;color:#8e96a3;letter-spacing:0.136px;">9.9MiB</div>
<div class="t" style="left:1592.53px;top:1280px;color:#8e96a3;">0</div>
<div class="t" style="left:1752.19px;top:1280px;color:#5390cc;letter-spacing:0.243px;">DaemonSet</div>
<div class="t" style="left:1978.75px;top:1280px;color:#5390cc;letter-spacing:-0.054px;width:127.25px;overflow:hidden;">ip-10-0-23-118.ec2.internal</div>
<div class="t" style="left:2138.19px;top:1280px;color:#a2a6ab;letter-spacing:0.543px;">BestEffort</div>
<div class="t" style="left:2296.90px;top:1280px;color:#8e96a3;letter-spacing:0.663px;">13d</div>
<div class="t" style="left:2427.79px;top:1280px;color:#68b85e;letter-spacing:0.585px;">Running</div>
<div class="t" style="left:534.16px;top:1354px;color:#8e96a3;letter-spacing:0.344px;width:242.44px;overflow:hidden;">app-a2d4ef951cef3-6f5c8d7b9-k2pvr</div>
<div class="t" style="left:872.13px;top:1354px;color:#5390cc;letter-spacing:0.081px;"><u>0e9d4ac7-2f<span class="z">b</span></u>...</div>
<div class="t" style="left:1272.13px;top:1354px;color:#8e96a3;letter-spacing:-0.514px;">0.001</div>
<div class="t" style="left:1431.50px;top:1354px;color:#8e96a3;letter-spacing:0.214px;">174.1MiB</div>
<div class="t" style="left:1592.53px;top:1354px;color:#8e96a3;">0</div>
<div class="t" style="left:1752.19px;top:1354px;color:#5390cc;letter-spacing:-0.346px;">ReplicaSet</div>
<div class="t" style="left:1978.75px;top:1354px;color:#5390cc;letter-spacing:-0.054px;width:127.25px;overflow:hidden;">ip-10-0-23-118.ec2.internal</div>
<div class="t" style="left:2138.19px;top:1354px;color:#a2a6ab;letter-spacing:0.739px;">Burstable</div>
<div class="t" style="left:2296.90px;top:1354px;color:#8e96a3;letter-spacing:0.663px;">13d</div>
<div class="t" style="left:2427.79px;top:1354px;color:#68b85e;letter-spacing:0.585px;">Running</div>
<div class="t" style="left:534.16px;top:1428px;color:#8e96a3;letter-spacing:0.206px;width:242.44px;overflow:hidden;">app-84bc65bae1747-79b6c5d8f-t8wnm</div>
<div class="t" style="left:872.13px;top:1428px;color:#5390cc;letter-spacing:0.081px;"><u>0e9d4ac7-2f<span class="z">b</span></u>...</div>
<div class="t" style="left:1272.13px;top:1428px;color:#8e96a3;letter-spacing:-0.599px;">0.000</div>
<div class="t" style="left:1432.46px;top:1428px;color:#8e96a3;letter-spacing:0.107px;">3.9MiB</div>
<div class="t" style="left:1592.53px;top:1428px;color:#8e96a3;">0</div>
<div class="t" style="left:1752.19px;top:1428px;color:#5390cc;letter-spacing:-0.346px;">ReplicaSet</div>
<div class="t" style="left:1978.75px;top:1428px;color:#5390cc;letter-spacing:-0.082px;width:127.25px;overflow:hidden;">ip-10-0-8-212.ec2.internal</div>
<div class="t" style="left:2138.19px;top:1428px;color:#a2a6ab;letter-spacing:0.739px;">Burstable</div>
<div class="t" style="left:2297.67px;top:1428px;color:#8e96a3;letter-spacing:0.279px;">28d</div>
<div class="t" style="left:2427.79px;top:1428px;color:#68b85e;letter-spacing:0.585px;">Running</div>
</div></body></html>
